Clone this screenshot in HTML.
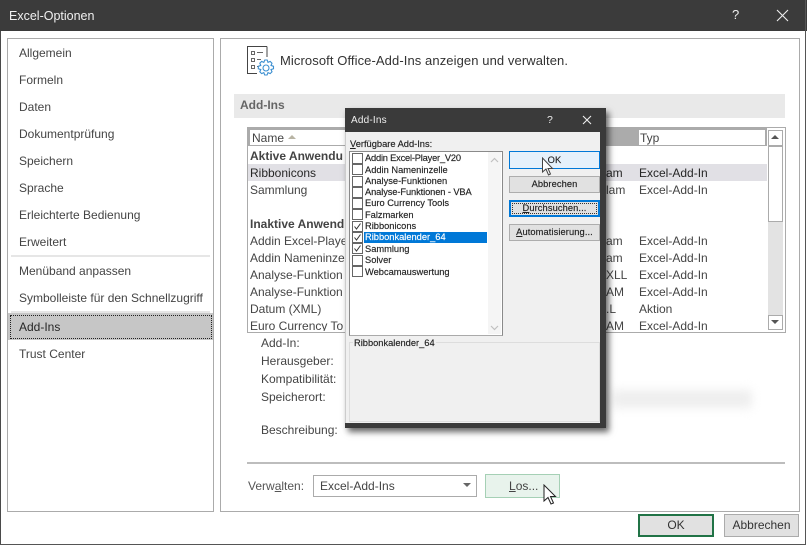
<!DOCTYPE html>
<html><head><meta charset="utf-8"><style>
html,body{margin:0;padding:0;background:#fff}
#r{position:relative;width:807px;height:546px;overflow:hidden;background:#fff;font-family:"Liberation Sans",sans-serif;font-size:12px;color:#444}
#r div,#r span.a{position:absolute;white-space:nowrap}
.t{line-height:16px;height:16px}
.m{color:#444;left:19px}
.d{font-size:9.3px;line-height:11px;height:11px;color:#222;left:365px;font-weight:normal;letter-spacing:0;-webkit-text-stroke:.15px #222}
.c{left:352px;width:9px;height:9px;border:1px solid #666;background:#fff}
.b{border:1px solid #adadad;background:#e1e1e1;text-align:center;font-size:9.3px;color:#222;line-height:16px;box-sizing:border-box;letter-spacing:.1px;-webkit-text-stroke:.15px #222}
u{text-decoration:underline}
</style></head><body><div id="r">
<div style="left:0;top:0;width:807px;height:31px;background:#3b3b3b"></div>
<div style="left:0;top:31px;width:1px;height:514px;background:#4a4a4a"></div>
<div style="left:805px;top:0;width:1px;height:545px;background:#555"></div>
<div style="left:0;top:544px;width:806px;height:1px;background:#555"></div>
<div class="t" style="left:9px;top:8px;color:#f0f0f0;font-size:12.5px">Excel-Optionen</div>
<div class="t" style="left:732px;top:7px;color:#eee;font-size:13px">?</div>
<svg style="position:absolute;left:776px;top:9px" width="13" height="13"><path d="M1 1L12 12M12 1L1 12" stroke="#eee" stroke-width="1.1" fill="none"/></svg>

<div style="left:7px;top:38px;width:205px;height:472px;border:1px solid #ababab"></div>
<div style="left:220px;top:38px;width:578px;height:472px;border:1px solid #ababab"></div>

<div class="t m" style="top:45px">Allgemein</div>
<div class="t m" style="top:72px">Formeln</div>
<div class="t m" style="top:99px">Daten</div>
<div class="t m" style="top:126px">Dokumentprüfung</div>
<div class="t m" style="top:153px">Speichern</div>
<div class="t m" style="top:180px">Sprache</div>
<div class="t m" style="top:207px">Erleichterte Bedienung</div>
<div class="t m" style="top:234px">Erweitert</div>
<div style="left:11px;top:255px;width:199px;height:2px;background:#e6e6e6"></div>
<div class="t m" style="top:263px">Menüband anpassen</div>
<div class="t m" style="top:290px">Symbolleiste für den Schnellzugriff</div>
<div style="left:11px;top:311px;width:199px;height:2px;background:#e6e6e6"></div>
<div style="left:8px;top:313px;width:205px;height:27px;background:#c6c6c6"></div>
<div style="left:10px;top:315px;width:200px;height:22px;border:1px dotted #222"></div>
<div class="t m" style="top:319px;color:#262626">Add-Ins</div>
<div class="t m" style="top:346px">Trust Center</div>

<svg style="position:absolute;left:246px;top:45px" width="30" height="32" fill="none">
<path d="M21 1.5H1.5V28.5H11" stroke="#444" stroke-width="1"/>
<path d="M21 1.5V12" stroke="#444" stroke-width="1"/>
<path d="M5.5 6.5h3v3h-3zM5.5 13.5h3v3h-3zM5.5 20.5h3v3h-3z" stroke="#666" stroke-width="1"/>
<path d="M11 7.5h6M11 14.5h4M11 21.5h2" stroke="#666" stroke-width="1"/>
<path d="M18.8 15l2.4 0 .8 2.4 2.2-1 1.8 1.8-1 2.2 2.5.9v2.4l-2.5.9 1 2.2-1.8 1.8-2.2-1-.9 2.4h-2.4l-.9-2.4-2.2 1-1.8-1.8 1-2.2-2.5-.9v-2.4l2.5-.9-1-2.2 1.800-1.800 2.200 1z" stroke="#3c8fd0" stroke-width="1.1"/>
<circle cx="20" cy="23" r="3" stroke="#3c8fd0" stroke-width="1.1"/>
</svg>
<div class="t" style="left:280px;top:53px;font-size:13px;color:#333;letter-spacing:.09px">Microsoft Office-Add-Ins anzeigen und verwalten.</div>

<div style="left:234px;top:94px;width:551px;height:24px;background:#e9e9e9"></div>
<div class="t" style="left:240px;top:97px;font-weight:bold;color:#666">Add-Ins</div>

<div style="left:247px;top:127px;width:537px;height:204px;border:1px solid #ababab;background:#fff"></div>
<div style="left:248px;top:128px;width:519px;height:18px;background:#ababab"></div>
<div style="left:250px;top:130px;width:345px;height:15px;background:#fff"></div>
<div style="left:639px;top:130px;width:126px;height:15px;background:#fff"></div>
<div class="t" style="left:252px;top:130px;color:#444">Name</div>
<svg style="position:absolute;left:288px;top:134px" width="9" height="6"><path d="M0 5L4 1L8 5Z" fill="#b8b4a4"/></svg>
<div class="t" style="left:640px;top:130px;color:#444">Typ</div>
<div style="left:248px;top:164px;width:519px;height:17px;background:#e1e0e5"></div>

<div class="t" style="left:250px;top:148px;font-weight:bold;color:#444">Aktive Anwendu</div>
<div class="t" style="left:250px;top:165px;color:#262626">Ribbonicons</div>
<div class="t" style="left:250px;top:182px">Sammlung</div>
<div class="t" style="left:250px;top:216px;font-weight:bold;color:#444">Inaktive Anwend</div>
<div class="t" style="left:250px;top:233px">Addin Excel-Playe</div>
<div class="t" style="left:250px;top:250px">Addin Nameninze</div>
<div class="t" style="left:250px;top:267px">Analyse-Funktion</div>
<div class="t" style="left:250px;top:284px">Analyse-Funktion</div>
<div class="t" style="left:250px;top:301px">Datum (XML)</div>
<div class="t" style="left:250px;top:318px;height:13px;overflow:hidden">Euro Currency To</div>

<div class="t" style="left:606px;top:165px;color:#262626">am</div>
<div class="t" style="left:606px;top:182px">lam</div>
<div class="t" style="left:606px;top:233px">am</div>
<div class="t" style="left:606px;top:250px">am</div>
<div class="t" style="left:606px;top:267px">XLL</div>
<div class="t" style="left:606px;top:284px">AM</div>
<div class="t" style="left:606px;top:301px">.L</div>
<div class="t" style="left:606px;top:318px;height:13px;overflow:hidden">AM</div>

<div class="t" style="left:639px;top:165px;color:#262626">Excel-Add-In</div>
<div class="t" style="left:639px;top:182px">Excel-Add-In</div>
<div class="t" style="left:639px;top:233px">Excel-Add-In</div>
<div class="t" style="left:639px;top:250px">Excel-Add-In</div>
<div class="t" style="left:639px;top:267px">Excel-Add-In</div>
<div class="t" style="left:639px;top:284px">Excel-Add-In</div>
<div class="t" style="left:639px;top:301px">Aktion</div>
<div class="t" style="left:639px;top:318px;height:13px;overflow:hidden">Excel-Add-In</div>

<div style="left:768px;top:130px;width:15px;height:198px;background:#e3e3e3"></div>
<div style="left:768px;top:130px;width:13px;height:14px;border:1px solid #ababab;background:#fff"></div>
<svg style="position:absolute;left:771px;top:134px" width="9" height="6"><path d="M0 5L4 1L8 5Z" fill="#555"/></svg>
<div style="left:768px;top:146px;width:13px;height:74px;border:1px solid #ababab;background:#fff"></div>
<div style="left:768px;top:315px;width:13px;height:13px;border:1px solid #ababab;background:#fff"></div>
<svg style="position:absolute;left:771px;top:319px" width="9" height="6"><path d="M0 1L4 5L8 1Z" fill="#555"/></svg>

<div class="t" style="left:261px;top:335px">Add-In:</div>
<div class="t" style="left:261px;top:353px">Herausgeber:</div>
<div class="t" style="left:261px;top:371px">Kompatibilität:</div>
<div class="t" style="left:261px;top:389px">Speicherort:</div>
<div class="t" style="left:261px;top:422px">Beschreibung:</div>

<div style="left:612px;top:390px;width:140px;height:18px;background:#eee;filter:blur(5px)"></div>

<div style="left:247px;top:462px;width:538px;height:2px;background:#bdbdbd"></div>
<div class="t" style="left:248px;top:478px;color:#555">Verw<u>a</u>lten:</div>
<div style="left:313px;top:475px;width:162px;height:20px;border:1px solid #ababab;background:#fff"></div>
<div class="t" style="left:320px;top:478px;color:#444">Excel-Add-Ins</div>
<svg style="position:absolute;left:463px;top:483px" width="9" height="6"><path d="M0 0H8L4 4Z" fill="#666"/></svg>
<div style="left:485px;top:474px;width:73px;height:22px;border:1px solid #a5d0b5;background:#e8f3ec"></div>
<div class="t" style="left:509px;top:478px;color:#444"><u>L</u>os...</div>
<svg style="position:absolute;left:543px;top:484px" width="14" height="22"><path d="M1 1V17L5 13.5L8 20L10.5 19L7.5 12.5H12.5Z" fill="#fff" stroke="#222" stroke-width="1"/></svg>

<div style="left:638px;top:514px;width:72px;height:19px;border:2px solid #217346;background:#e1e1e1;text-align:center;line-height:19px;color:#333">OK</div>
<div style="left:724px;top:514px;width:73px;height:21px;border:1px solid #ababab;background:#e1e1e1;text-align:center;line-height:21px;color:#333">Abbrechen</div>

<!-- dialog -->
<div style="left:345px;top:108px;width:261px;height:320px;background:#3a3a3a;box-shadow:3px 4px 6px rgba(0,0,0,.6)"></div>
<div style="left:345px;top:132px;width:255px;height:291px;background:#f0f0f0;border-left:1px solid #ccc;box-sizing:border-box"></div>
<div class="t" style="left:351px;top:113px;color:#f0f0f0;font-size:10px;letter-spacing:.2px">Add-Ins</div>
<div class="t" style="left:547px;top:112px;color:#eee;font-size:10.5px">?</div>
<svg style="position:absolute;left:582px;top:115px" width="10" height="10"><path d="M1 1L9 9M9 1L1 9" stroke="#eee" stroke-width="1.1" fill="none"/></svg>
<div class="d" style="left:350px;top:139px"><u>V</u>erfügbare Add-Ins:</div>
<div style="left:349px;top:151px;width:152px;height:183px;border:1px solid #8a8a8a;border-bottom-color:#aaa;background:#fff"></div>
<div style="left:488px;top:152px;width:13px;height:182px;background:#f5f5f5"></div>
<svg style="position:absolute;left:490px;top:157px" width="9" height="6"><path d="M1 5L4.5 1.5L8 5" stroke="#c0c0c0" stroke-width="1.2" fill="none"/></svg>
<svg style="position:absolute;left:490px;top:325px" width="9" height="6"><path d="M1 1L4.5 4.500L8 1" stroke="#c0c0c0" stroke-width="1.2" fill="none"/></svg>
<div style="left:364px;top:232px;width:123px;height:11px;background:#0078d7"></div>
<div class="c" style="top:153px"></div><div class="d" style="top:153px;letter-spacing:-.2px">Addin Excel-Player_V20</div>
<div class="c" style="top:164px"></div><div class="d" style="top:165px">Addin Nameninzelle</div>
<div class="c" style="top:176px"></div><div class="d" style="top:176px">Analyse-Funktionen</div>
<div class="c" style="top:187px"></div><div class="d" style="top:187px;letter-spacing:-.1px">Analyse-Funktionen - VBA</div>
<div class="c" style="top:198px"></div><div class="d" style="top:198px">Euro Currency Tools</div>
<div class="c" style="top:209px"></div><div class="d" style="top:210px">Falzmarken</div>
<div class="c" style="top:221px"></div><div class="d" style="top:221px">Ribbonicons</div>
<div class="c" style="top:232px"></div><div class="d" style="top:232px;color:#fff;-webkit-text-stroke:.15px #fff">Ribbonkalender_64</div>
<div class="c" style="top:243px"></div><div class="d" style="top:244px">Sammlung</div>
<div class="c" style="top:255px"></div><div class="d" style="top:255px">Solver</div>
<div class="c" style="top:266px"></div><div class="d" style="top:267px">Webcamauswertung</div>
<svg style="position:absolute;left:352px;top:221px" width="11" height="56" fill="none" stroke="#333" stroke-width="1"><path d="M2.500 5.500L4.500 8L8.500 2.500M2.500 16.500L4.500 19L8.500 13.500M2.500 27.500L4.500 30L8.500 24.500"/></svg>

<div class="b" style="left:509px;top:151px;width:91px;height:18px;background:#e5f1fb;border-color:#0078d7">OK</div>
<div class="b" style="left:509px;top:176px;width:91px;height:17px;line-height:15px">Abbrechen</div>
<div class="b" style="left:509px;top:200px;width:91px;height:17px;border:2px solid #0078d7;line-height:13px"><u>D</u>urchsuchen...</div>
<div style="left:512px;top:203px;width:83px;height:9px;border:1px dotted #333"></div>
<div class="b" style="left:509px;top:224px;width:91px;height:17px;line-height:15px"><u>A</u>utomatisierung...</div>
<svg style="position:absolute;left:541px;top:157px" width="13" height="20"><path d="M1.5 1V15L5 12L7.500 18L9.500 17L7 11.500H11.500Z" fill="#fff" stroke="#444" stroke-width="1"/></svg>
<div style="left:349px;top:342px;width:249px;height:78px;border:1px solid #ddd"></div>
<div class="d" style="left:353px;top:338px;background:#f0f0f0;padding:0 1px">Ribbonkalender_64</div>
</div></body></html>
